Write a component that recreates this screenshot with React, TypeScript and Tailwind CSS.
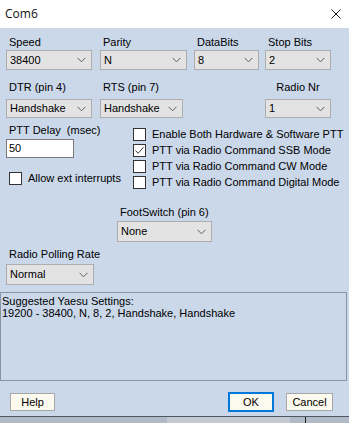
import { ReactNode } from 'react';

function Chevron() {
    return (
        <svg width="9" height="6" viewBox="0 0 9 6" className="shrink-0">
            <path d="M0.5 0.8 L4.5 4.8 L8.5 0.8" fill="none" stroke="#5c5c5c" strokeWidth="1" />
        </svg>
    );
}

function Select({ value, w, h = 'h-[20px]' }: { value: string; w: string; h?: string }) {
    return (
        <div className={`${w} ${h} flex items-center justify-between border border-[#adadad] bg-[#e3e3e3] pl-[3px] pr-[5px]`}>
            <span>{value}</span>
            <Chevron />
        </div>
    );
}

function Check({ checked = false }: { checked?: boolean }) {
    return (
        <div className="w-[13px] h-[13px] shrink-0 border border-[#333333] bg-white flex items-center justify-center">
            {checked && (
                <svg width="11" height="11" viewBox="0 0 11 11">
                    <path d="M1.5 5.5 L4.2 8.3 L9.5 2.2" fill="none" stroke="#3a3a3a" strokeWidth="1" />
                </svg>
            )}
        </div>
    );
}

function CheckRow({ label, checked }: { label: string; checked?: boolean }) {
    return (
        <div className="h-[16px] flex items-start gap-[6px]">
            <Check checked={checked} />
            <span className="leading-[13px]">{label}</span>
        </div>
    );
}

function Field({ label, children, className = '' }: { label: string; children: ReactNode; className?: string }) {
    return (
        <div className={`flex flex-col ${className}`}>
            <div className="h-[15px] leading-[14px] pl-[3px]">{label}</div>
            {children}
        </div>
    );
}

export default function App() {
    return (
        <div className="w-[349px] h-[423px] overflow-hidden bg-[#cbd8ea] text-[11px] text-black font-['Liberation_Sans',Arial,sans-serif] flex flex-col">
            {/* title bar */}
            <div className="h-[28px] shrink-0 bg-white flex items-center justify-between pl-[5px] pr-[8px]">
                <span className="text-[12px] font-['Open_Sans',sans-serif] text-[#111]">Com6</span>
                <svg width="10" height="10" viewBox="0 0 10 10">
                    <path d="M0.5 0.5 L9.5 9.5 M9.5 0.5 L0.5 9.5" stroke="#222" strokeWidth="1" />
                </svg>
            </div>

            {/* row 1 */}
            <div className="flex pt-[7px] pl-[6px]">
                <Field label="Speed"><Select value="38400" w="w-[86px]" /></Field>
                <Field label="Parity" className="ml-[8px]"><Select value="N" w="w-[87px]" /></Field>
                <Field label="DataBits" className="ml-[7px]"><Select value="8" w="w-[65px]" /></Field>
                <Field label="Stop Bits" className="ml-[6px]"><Select value="2" w="w-[66px]" /></Field>
            </div>

            {/* row 2 */}
            <div className="flex mt-[10px] pl-[6px]">
                <div className="flex flex-col">
                    <div className="h-[19px] leading-[14px] pl-[3px]">DTR (pin 4)</div>
                    <Select value="Handshake" w="w-[86px]" h="h-[19px]" />
                </div>
                <div className="flex flex-col ml-[8px]">
                    <div className="h-[19px] leading-[14px] pl-[3px]">RTS (pin 7)</div>
                    <Select value="Handshake" w="w-[83px]" h="h-[19px]" />
                </div>
                <div className="flex flex-col ml-[82px]">
                    <div className="h-[19px] leading-[14px] text-center">Radio Nr</div>
                    <Select value="1" w="w-[66px]" h="h-[19px]" />
                </div>
            </div>

            {/* middle */}
            <div className="flex h-[74px] pl-[6px]">
                <div className="w-[127px] flex flex-col pt-[5px]">
                    <div className="h-[16px] leading-[14px] pl-[3px]">PTT Delay&nbsp;&nbsp;(msec)</div>
                    <div className="w-[68px] h-[19px] border border-[#7a7a7a] bg-white flex items-center pl-[2px]">50</div>
                    <div className="mt-[14px] ml-[3px] flex items-start gap-[6px]">
                        <Check />
                        <span className="leading-[13px]">Allow ext interrupts</span>
                    </div>
                </div>
                <div className="flex flex-col pt-[10px]">
                    <CheckRow label="Enable Both Hardware & Software PTT" />
                    <CheckRow label="PTT via Radio Command SSB Mode" checked />
                    <CheckRow label="PTT via Radio Command CW Mode" />
                    <CheckRow label="PTT via Radio Command Digital Mode" />
                </div>
            </div>

            {/* footswitch */}
            <div className="flex flex-col mt-[13px] pl-[117px]">
                <div className="h-[16px] leading-[14px] pl-[3px]">FootSwitch (pin 6)</div>
                <Select value="None" w="w-[95px]" h="h-[21px]" />
            </div>

            {/* polling rate */}
            <div className="flex flex-col mt-[5px] pl-[6px]">
                <div className="h-[17px] leading-[14px] pl-[3px]">Radio Polling Rate</div>
                <Select value="Normal" w="w-[88px]" h="h-[21px]" />
            </div>

            {/* suggested settings */}
            <div className="mt-[7px] w-[347px] h-[89px] shrink-0 border border-[#8a94a3] px-[1px] pt-[2px] leading-[12px]">
                <div>Suggested Yaesu Settings:</div>
                <div>19200 - 38400, N, 8, 2, Handshake, Handshake</div>
            </div>

            {/* buttons */}
            <div className="flex items-center mt-[11px] pl-[10px] pr-[16px]">
                <button className="w-[45px] h-[18px] border border-[#a8a8a8] bg-[#fcfaee] leading-none">Help</button>
                <button className="ml-auto w-[46px] h-[20px] border-2 border-[#0078d7] bg-[#fcfaee] leading-none">OK</button>
                <button className="ml-[12px] w-[47px] h-[18px] border border-[#a8a8a8] bg-[#fcfaee] leading-none">Cancel</button>
            </div>

            {/* background window strip */}
            <div className="mt-auto h-[7px] shrink-0 border-t border-[#4d5563] bg-[#b0b9c6] flex">
                <div className="w-[167px]" />
                <div className="w-[123px] bg-[#c3cad4]" />
                <div className="w-[15px]" />
                <div className="w-[1px] bg-[#222]" />
            </div>
        </div>
    );
}
